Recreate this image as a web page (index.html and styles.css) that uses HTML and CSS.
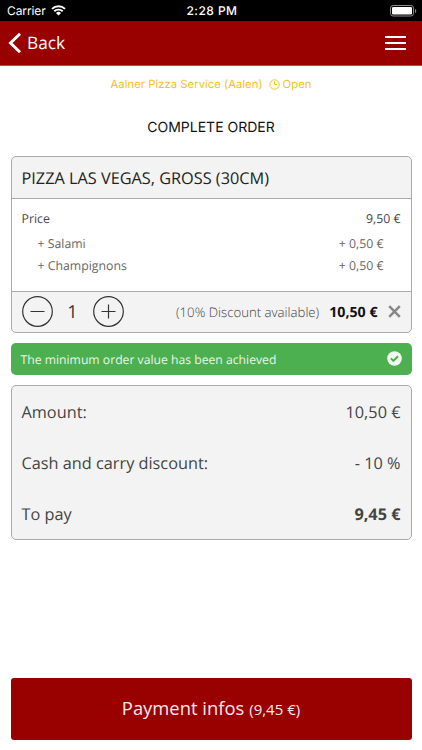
FILE: index.html
```html
<!DOCTYPE html>
<html lang="en">
<head>
<meta charset="utf-8">
<meta name="viewport" content="width=device-width">
<title>Complete order</title>
<link rel="stylesheet" href="styles.css">
</head>
<body>
<div class="status">
  <div class="carrier"><span>Carrier</span>
    <svg width="15" height="11" viewBox="0 0 15 11" fill="none" stroke="#fff"><path d="M1 3.900a9.300 9.300 0 0 1 13 0M3.300 6.300a6 6 0 0 1 8.400 0" stroke-width="1.900"/><path d="M5 8a3.600 3.600 0 0 1 5 0l-2.500 2.600z" fill="#fff" stroke="none"/></svg>
  </div>
  <time>2:28 PM</time>
  <svg class="battery" width="27" height="12" viewBox="0 0 27 12"><rect x=".5" y=".5" width="23" height="10.500" rx="2.600" fill="none" stroke="#8b8b8b"/><rect x="2" y="2" width="20" height="7.500" rx="1.200" fill="#fff"/><path d="M25 4v4q1.300-.5 1.300-2T25 4" fill="#8b8b8b"/></svg>
</div>
<header class="nav">
  <a class="back"><svg width="14" height="22" viewBox="0 0 14 22" fill="none" stroke="#fff" stroke-width="3"><path d="M12 1.700 2.500 11l9.500 9.300"/></svg><span>Back</span></a>
  <div class="menu"><i></i><i></i><i></i></div>
</header>
<main>
  <p class="shop"><span>Aalner Pizza Service (Aalen)</span>
    <svg width="11" height="11" viewBox="0 0 11 11" fill="none" stroke="#f8bf27"><circle cx="5.500" cy="5.500" r="4.700"/><path d="M5.500 2.500v3h2.700"/></svg>
    <span>Open</span></p>
  <h1>COMPLETE ORDER</h1>
  <section class="card item">
    <h2>PIZZA LAS VEGAS, GROSS (30CM)</h2>
    <div class="prices">
      <div class="row"><span>Price</span><span>9,50 €</span></div>
      <div class="row extra"><span>+ Salami</span><span>+ 0,50 €</span></div>
      <div class="row extra"><span>+ Champignons</span><span>+ 0,50 €</span></div>
    </div>
    <div class="quantity">
      <svg width="31" height="31" viewBox="0 0 31 31" fill="none" stroke="#333" stroke-width="1.200"><circle cx="15.500" cy="15.500" r="14.800"/><path d="M8.500 15.500h14"/></svg>
      <span class="count">1</span>
      <svg width="31" height="31" viewBox="0 0 31 31" fill="none" stroke="#333" stroke-width="1.200"><circle cx="15.500" cy="15.500" r="14.800"/><path d="M8.500 15.500h14M15.500 8.500v14"/></svg>
      <span class="discount">(10% Discount available)</span>
      <b class="total">10,50 €</b>
      <svg class="remove" width="13" height="13" viewBox="0 0 13 13" stroke="#888" stroke-width="2.500"><path d="m1.200 1.200 10.600 10.600M11.800 1.200 1.200 11.800"/></svg>
    </div>
  </section>
  <div class="notice"><span>The minimum order value has been achieved</span>
    <svg width="15" height="15" viewBox="0 0 15 15"><circle cx="7.500" cy="7.500" r="7.300" fill="#eef8ee"/><path d="m3.900 7.400 2.500 2.500 4.600-4.600" fill="none" stroke="#4caf50" stroke-width="2"/></svg>
  </div>
  <section class="card summary">
    <div class="row"><span>Amount:</span><span>10,50 €</span></div>
    <div class="row"><span>Cash and carry discount:</span><span>- 10 %</span></div>
    <div class="row"><span>To pay</span><b>9,45 €</b></div>
  </section>
</main>
<button class="pay"><span>Payment infos</span><small>(9,45 €)</small></button>
</body>
</html>
```
FILE: styles.css
```css
* { box-sizing: border-box; }
body {
  margin: 0;
  height: 750px;
  display: flex;
  flex-direction: column;
  background: #fff;
  color: #444;
  font-family: "Open Sans", sans-serif;
  text-rendering: geometricPrecision;
  overflow: hidden;
}
svg { display: block; flex: none; }
.status {
  height: 21px;
  flex: none;
  display: grid;
  grid-template-columns: 1fr auto 1fr;
  align-items: center;
  padding: 0 5px 0 7px;
  background: #000;
  color: #fff;
  font: 12px/21px Inter, sans-serif;
}
.carrier { display: flex; align-items: center; gap: 6px; letter-spacing: -.1px; }
.carrier svg { margin-left: -1px; }
.status time { font-weight: 500; letter-spacing: .45px; }
.battery { justify-self: end; }
.nav {
  height: 45px;
  flex: none;
  display: flex;
  justify-content: space-between;
  align-items: center;
  padding: 0 16px 1px 8px;
  background: #990000;
  border-bottom: 1px solid #b84a4a;
  color: #fff;
}
.back { display: flex; align-items: center; gap: 5px; font-size: 17.300px; line-height: 24px; }
.back span { padding-top: 2px; }
.menu { width: 21px; display: grid; gap: 4px; }
.menu i { height: 2px; background: #fff; }
main { flex: 1; padding: 0 10.500px; }
.shop {
  display: flex;
  justify-content: center;
  align-items: center;
  height: 16px;
  margin: 10px 0 0;
  color: #f8bf27;
  font: 11.300px/16px Inter, sans-serif;
  letter-spacing: .02px;
}
.shop svg { margin: 0 3px 0 6px; }
h1 {
  margin: 27px 0 0;
  height: 18px;
  color: #111;
  font: 400 14px/18px Inter, sans-serif;
  text-align: center;
}
.card { border: 1px solid #aaa; border-radius: 5px; overflow: hidden; background: #f3f3f3; }
.item { margin-top: 19px; height: 177px; }
h2 {
  margin: 0;
  height: 42px;
  padding: 0 10px;
  border-bottom: 1px solid #aaa;
  color: #222;
  font-size: 16.300px;
  font-weight: 400;
  line-height: 42px;
}
.prices { height: 93px; padding: 9px 10px 0; background: #fff; border-bottom: 1px solid #aaa; }
.row { display: flex; justify-content: space-between; }
.prices .row { font-size: 12.300px; line-height: 22px; }
.prices .extra { padding: 0 17px 0 16px; color: #666; }
.prices .row:first-child { height: 25px; }
.quantity { height: 39px; display: flex; align-items: center; padding: 0 10px; }
.count { width: 40px; padding-top: 1px; text-align: center; font-size: 18px; color: #333; }
.discount { margin-left: auto; font-size: 13.200px; font-weight: 300; }
.total { margin: 0 10px; padding-top: 2px; color: #111; font-size: 14.200px; }
.notice {
  height: 32px;
  margin: 10px 0;
  padding: 0 10px;
  display: flex;
  align-items: center;
  justify-content: space-between;
  border-radius: 5px;
  background: #4caf50;
  color: #e9f6e9;
  font-size: 12.200px;
  line-height: 31px;
}
.notice svg { margin-bottom: 1px; }
.summary { height: 155px; padding: 1px 10px 0; }
.summary .row { height: 51px; font-size: 16.300px; line-height: 51px; }
.pay {
  height: 62px;
  margin: 0 10.500px 10px;
  flex: none;
  display: flex;
  align-items: baseline;
  justify-content: center;
  gap: 5px;
  padding: 0;
  border: 0;
  border-radius: 3px;
  background: #990000;
  color: #fbeaea;
  font: 18.400px/60px "Open Sans", sans-serif;
}
.pay small { font-size: 15px; }
```
